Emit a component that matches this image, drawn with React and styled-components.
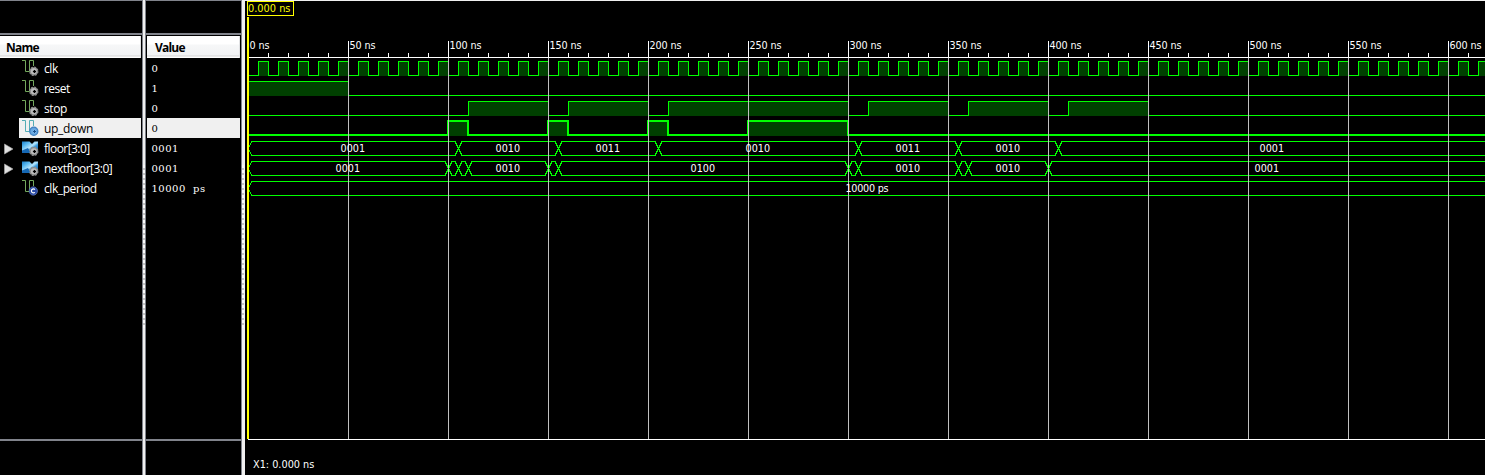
import React from "react";
import styled, { createGlobalStyle } from "styled-components";

const GlobalStyle = createGlobalStyle`
  * { box-sizing: border-box; }
  body { margin: 0; background: #000; overflow: hidden; }
`;

const Window = styled.div`
  display: flex;
  width: 1485px;
  height: 475px;
  background: #000;
  color: #fff;
  font-family: "Open Sans", "Noto Sans", sans-serif;
`;

const Column = styled.section`
  width: ${(p) => p.$width}px;
  flex: none;
  display: flex;
  flex-direction: column;
  border-top: 1px solid #80838b;
`;

const ColumnTop = styled.div`
  height: 34px;
  flex: none;
  border-bottom: 2px solid #80838b;
  margin-bottom: 1px;
`;

const ColumnHeader = styled.div`
  height: 22px;
  margin: 0 ${(p) => p.$right}px 0 ${(p) => p.$left}px;
  padding-left: ${(p) => p.$pad}px;
  background: linear-gradient(#fff 0 8px, #f6f7f8 9px, #f1f2f4 19px, #d5d5d5 20px, #fff 21px);
  border-right: 1px solid #e2e3e5;
  color: #000;
  font: 700 12px/23px "Open Sans", sans-serif;
  letter-spacing: -0.8px;
`;

const Rows = styled.div`
  height: 383px;
  border-bottom: 2px solid #80838b;
`;

const NameRow = styled.div`
  display: flex;
  align-items: center;
  height: 20px;
  margin: 0 1px 0 0;
  font-size: 12px;
  line-height: 20px;
  color: ${(p) => (p.$selected ? "#000" : "#fff")};
  background: ${(p) => (p.$selected ? "linear-gradient(90deg, #000 19px, #f0f0f0 19px)" : "none")};
`;

const Expander = styled.span`
  width: 22px;
  height: 20px;
  flex: none;
  padding: 5px 0 0 4px;
  line-height: 0;
`;

const IconSlot = styled.span`
  width: 22px;
  height: 18px;
  flex: none;
  line-height: 0;
`;

const SignalName = styled.span`
  white-space: nowrap;
  padding-top: 1px;
  letter-spacing: ${(p) => p.$spacing || 0}px;
`;

const ValueRow = styled.div`
  height: 20px;
  margin: 0 1px 0 1px;
  padding-left: 4.5px;
  font: 10px/22px "DejaVu Serif", serif;
  letter-spacing: 0.5px;
  word-spacing: 3.6px;
  color: ${(p) => (p.$selected ? "#000" : "#fff")};
  background: ${(p) => (p.$selected ? "#f0f0f0" : "none")};
`;

const Splitter = styled.div`
  width: 4px;
  flex: none;
  background: #f0f0f0;
  border-left: 1px solid #80838b;
  border-right: ${(p) => (p.$edge ? "0" : "1px solid #80838b")};
  padding-top: 165px;
`;

const Grip = styled.div`
  width: 2px;
  height: 163px;
  background: repeating-linear-gradient(#fafafa 0 3px, #c8c8c8 3px 5px);
`;

const WavePanel = styled.section`
  position: relative;
  flex: 1;
  min-width: 0;
  font-family: "DejaVu Sans Condensed", "DejaVu Sans", sans-serif;
`;

const Chart = styled.svg`
  display: block;
`;

const ChartText = styled.text`
  font: 10.7px "DejaVu Sans Condensed", "DejaVu Sans", sans-serif;
  fill: #fff;
`;

const CursorBadge = styled.div`
  position: absolute;
  left: 2px;
  top: 1px;
  width: 47px;
  height: 15px;
  border: 1px solid #ff0;
  background: #000;
  color: #ff0;
  font-size: 10.9px;
  line-height: 13px;
  padding-left: 0;
  white-space: nowrap;
`;

const Footer = styled.footer`
  padding: 18px 0 0 8px;
  font-size: 10.8px;
  line-height: 14px;
`;

const WIRE = "M0 1.5H3.5V12.5H7.5V1.5H11.5V7";

function SignalIcon({ kind }) {
  if (kind === "bus") {
    return (
      <svg width="17" height="18">
        <defs>
          <linearGradient id="busBlue" x1="0" y1="0" x2="1" y2="1">
            <stop offset="0" stopColor="#1b7fc8" />
            <stop offset=".25" stopColor="#58b8f0" />
            <stop offset=".5" stopColor="#b4e4fc" />
            <stop offset=".62" stopColor="#3c9ee0" />
            <stop offset="1" stopColor="#0a4f98" />
          </linearGradient>
        </defs>
        <path d="M0 2.5H7.5L9 4L10 5L11 4L12.5 2.5H16V14H0Z" fill="url(#busBlue)" />
        <path d="M0 14V11.5L6 9L9 14Z" fill="#1668b4" />
        <Gear />
      </svg>
    );
  }
  const selected = kind === "selected";
  return (
    <svg width="17" height="18">
      <path d={WIRE} fill="none" stroke={selected ? "#53adb5" : "#74a95e"} />
      {kind === "const" ? (
        <>
          <circle cx="11.3" cy="12" r="4.2" fill="#2949a5" stroke="#7187c5" strokeWidth=".6" />
          <path d="M12.9 10.6A2 2 0 1 0 12.9 13.3" fill="none" stroke="#fff" strokeWidth="1.2" />
        </>
      ) : (
        <Gear blue={selected} />
      )}
    </svg>
  );
}

function Gear({ blue }) {
  return (
    <g>
      <circle cx="11.8" cy="12.3" r="4.1" fill={blue ? "#5b9bd8" : "#8a8a8a"} stroke={blue ? "#3f80c0" : "#8f8f8f"} strokeWidth="1.2" strokeDasharray={blue ? "none" : "2 1.2"} />
      <circle cx="11.8" cy="12.3" r="3" fill={blue ? "#69a9e2" : "#bdbdbd"} />
      <circle cx="12.5" cy="12.5" r="1.7" fill={blue ? "#7db8ea" : "#777"} />
      <path d="M11 12.5h3M12.5 11v3" stroke={blue ? "#174f8d" : "#000"} strokeWidth="1" />
    </g>
  );
}

const signals = [
  { name: "clk", value: "0", icon: "wire", spacing: -0.4 },
  { name: "reset", value: "1", icon: "wire", spacing: -0.55 },
  { name: "stop", value: "0", icon: "wire", spacing: -0.4 },
  { name: "up_down", value: "0", icon: "selected", selected: true, spacing: -0.3 },
  { name: "floor[3:0]", value: "0001", icon: "bus", bus: true, spacing: -0.55 },
  { name: "nextfloor[3:0]", value: "0001", icon: "bus", bus: true, spacing: -0.55 },
  { name: "clk_period", value: "10000 ps", icon: "const", spacing: -0.42 },
];

/* Horizontal scale: 2px per ns, time zero at x = 3. */
const X0 = 3;
const END = 1240;
const at = (ns) => X0 + ns * 2;
const high = (row) => 61 + row * 20;
const low = (row) => 75 + row * 20;

function BitWave({ row, pulses, thick }) {
  const w = thick ? 2 : 1;
  const off = thick ? 0 : 0.5;
  const yh = high(row) + off;
  const yl = low(row) + off;
  let d = "";
  pulses.forEach(([a, b], i) => {
    const start = at(a) + off;
    if (i === 0) d += a === 0 ? `M${start} ${yh}` : `M${X0} ${yl}H${start}V${yh}`;
    else d += `H${start}V${yh}`;
    d += `H${at(b) + off}V${yl}`;
  });
  d += `H${END}`;
  return (
    <g shapeRendering="crispEdges">
      {pulses.map(([a, b]) => (
        <rect key={a} x={at(a)} y={high(row)} width={(b - a) * 2} height="15" fill="#004000" />
      ))}
      <path d={d} fill="none" stroke="#0f0" strokeWidth={w} />
    </g>
  );
}

function BusWave({ row, changes }) {
  const t = high(row) + 0.5;
  const b = low(row) + 0.5;
  const m = (t + b) / 2;
  let top = `M${X0 + 0.5} ${m}L${X0 + 3.5} ${t}`;
  let bottom = `M${X0 + 0.5} ${m}L${X0 + 3.5} ${b}`;
  changes.forEach((ns) => {
    const x = at(ns) + 0.5;
    top += `H${x - 3.5}L${x} ${m}L${x + 3.5} ${t}`;
    bottom += `H${x - 3.5}L${x} ${m}L${x + 3.5} ${b}`;
  });
  return <path d={`${top}H${END}${bottom}H${END}`} fill="none" stroke="#0f0" shapeRendering="crispEdges" />;
}

const clock = Array.from({ length: 62 }, (_, i) => [5 + i * 10, 10 + i * 10]);
const stop = [[110, 150], [160, 200], [210, 300], [310, 350], [360, 400], [410, 450]];
const upDown = [[100, 110], [150, 160], [200, 210], [250, 300]];
const floorChanges = [105, 155, 205, 305, 355, 405];
const nextChanges = [100, 105, 110, 150, 155, 300, 305, 355, 360, 400];

/* Bus values: row, left edge, text. */
const labels = [
  [4, 96, "0001"], [4, 251, "0010"], [4, 351, "0011"], [4, 501, "0010"], [4, 651, "0011"], [4, 751, "0010"], [4, 1015, "0001"],
  [5, 91, "0001"], [5, 251, "0010"], [5, 446, "0100"], [5, 651, "0010"], [5, 751, "0010"], [5, 1010, "0001"],
];
const major = Array.from({ length: 13 }, (_, i) => i * 50);
const minor = Array.from({ length: 62 }, (_, i) => i * 10).filter((n) => n % 50);

function Waveform() {
  return (
    <Chart width="1240" height="440">
      <rect width="1240" height="1" fill="#f0f0f0" />
      <BitWave row={0} pulses={clock} />
      <BitWave row={1} pulses={[[0, 50]]} />
      <BitWave row={2} pulses={stop} />
      <BitWave row={3} pulses={upDown} thick />
      <BusWave row={4} changes={floorChanges} />
      <BusWave row={5} changes={nextChanges} />
      <BusWave row={6} changes={[]} />
      {major.slice(1).map((n) => (
        <g key={n}>
          <rect x={at(n)} y="58" width="1" height="381" fill="#c0c0c0" />
          <rect x={at(n)} y="41" width="1" height="17" fill="#fff" />
        </g>
      ))}
      {minor.map((n) => (
        <rect key={n} x={at(n)} y="53" width="1" height="4" fill="#fff" />
      ))}
      <rect x="3" y="57" width="1237" height="1" fill="#fff" />
      <rect x="3" y="439" width="1237" height="1" fill="#fff" />
      {major.map((n) => (
        <ChartText key={n} x={at(n) + 1.5} y="49" textLength={n === 0 ? 20 : n < 100 ? 26 : 32}>
          {n} ns
        </ChartText>
      ))}
      {labels.map(([row, x, text]) => (
        <ChartText key={`${row}-${x}`} x={x - 0.5} y={72 + row * 20} textLength="24.5">
          {text}
        </ChartText>
      ))}
      <ChartText x="600.5" y="192" textLength="43">10000 ps</ChartText>
      <rect x="2" y="17" width="2" height="422" fill="#ff0" />
    </Chart>
  );
}

export default function App() {
  return (
    <Window>
      <GlobalStyle />
      <Column $width={142}>
        <ColumnTop />
        <ColumnHeader $left={0} $right={1} $pad={6}>Name</ColumnHeader>
        <Rows>
          {signals.map((s) => (
            <NameRow key={s.name} $selected={s.selected}>
              <Expander>
                {s.bus && (
                  <svg width="10" height="12">
                    <path d="M.5 1L9 6L.5 11Z" fill="#e0e0e0" stroke="#aaa" strokeWidth=".6" />
                  </svg>
                )}
              </Expander>
              <IconSlot>
                <SignalIcon kind={s.icon} />
              </IconSlot>
              <SignalName $spacing={s.spacing}>{s.name}</SignalName>
            </NameRow>
          ))}
        </Rows>
      </Column>
      <Splitter><Grip /></Splitter>
      <Column $width={95}>
        <ColumnTop />
        <ColumnHeader $left={1} $right={1} $pad={8}>Value</ColumnHeader>
        <Rows>
          {signals.map((s) => (
            <ValueRow key={s.name} $selected={s.selected}>{s.value}</ValueRow>
          ))}
        </Rows>
      </Column>
      <Splitter $edge><Grip /></Splitter>
      <WavePanel>
        <Waveform />
        <CursorBadge>0.000 ns</CursorBadge>
        <Footer>X1: 0.000 ns</Footer>
      </WavePanel>
    </Window>
  );
}
